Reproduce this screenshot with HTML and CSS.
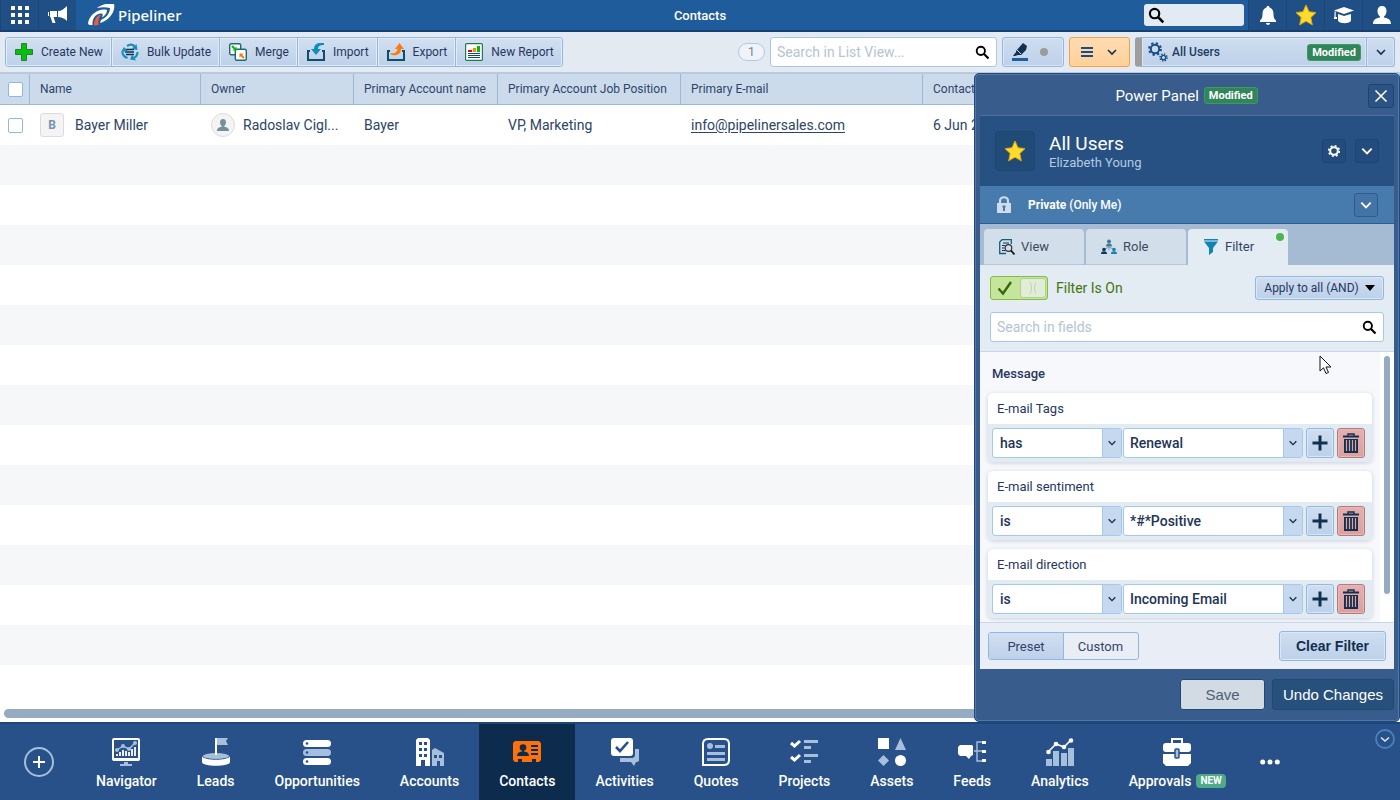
FILE: index.html
```html
<!DOCTYPE html>
<html lang="en">
<head>
  <meta charset="UTF-8">
  <title>Pipeliner - Contacts</title>
  <link rel="stylesheet" href="styles.css">
</head>
<body>
  <!-- shared shapes -->
  <svg class="sprite" aria-hidden="true">
    <symbol id="chevron" viewBox="0 0 12 12"><path d="M2 4l4 4 4-4" fill="none" stroke="currentColor" stroke-width="1.6"/></symbol>
    <symbol id="search" viewBox="0 0 16 16"><circle cx="6.2" cy="6.2" r="4.4" fill="none" stroke="currentColor" stroke-width="2"/><path d="M9.4 9.4l5 5" stroke="currentColor" stroke-width="2.4"/></symbol>
    <symbol id="star" viewBox="0 0 22 22">
      <path d="M11 1l3 6.8 7 .8-5.2 4.9 1.5 7.3L11 17.2 4.7 20.8l1.5-7.3L1 8.6l7-.8z" fill="#fddc2c" stroke="#e0a80c" stroke-width="1"/>
    </symbol>
    <symbol id="plus" viewBox="0 0 16 16"><path d="M8 .5v15M.5 8h15" stroke="currentColor" stroke-width="3"/></symbol>
    <symbol id="trash" viewBox="0 0 16 20">
      <path d="M5 3V1h6v2" fill="none" stroke="currentColor" stroke-width="1.4"/>
      <path d="M0 2.5h16v2H0zM1 6h14v14H1z" fill="currentColor"/>
      <path d="M3.5 7v11M6.5 7v11M9.5 7v11M12.5 7v11" stroke="#dfa3a3" stroke-width="1.2"/>
    </symbol>
  </svg>

  <header class="topbar">
    <div class="topbar-left">
      <button class="top-btn" aria-label="Apps">
        <svg width="18" height="18" viewBox="0 0 18 18" fill="#fff"><path d="M0 0h4v4H0zM7 0h4v4H7zM14 0h4v4h-4zM0 7h4v4H0zM7 7h4v4H7zM14 7h4v4h-4zM0 14h4v4H0zM7 14h4v4H7zM14 14h4v4h-4z"/></svg>
      </button>
      <button class="top-btn" aria-label="News">
        <svg width="20" height="20" viewBox="0 0 20 20" fill="#fff"><path d="M19 1v15c-3-3-6-4-9-4V6c3 0 6-2 9-5zM9 6v6H5.5l2 6H4.5L2.5 12H2V6zM1 7v4H0V7z"/></svg>
      </button>
      <a class="logo" href="#">
        <svg width="28" height="22" viewBox="0 0 28 22"><path d="M9 4C14 0 21-1 26 0c2 7-5 17-14 19l1-3c5-2 9-7 9-12-4-1-8-1-13 0z" fill="#fff"/><path d="M19 6C11 4 3 10 .5 17c-1 3 0 4 2 4h2C4 15 7 10 13 9.5c2 0 2 1 1 4 3-2 5-4 5-7.5z" fill="#fff"/><path d="M13 10.500c-4 1-7 5-7 11l4.500-.5c-.5-4 0-7 2.500-10.500z" fill="#f15b3a"/></svg>
        <span>Pipeliner</span>
      </a>
    </div>
    <h1 class="topbar-title">Contacts</h1>
    <div class="topbar-right">
      <label class="global-search">
        <svg width="17" height="17"><use href="#search"/></svg>
        <input type="text" aria-label="Search">
      </label>
      <button class="top-btn" aria-label="Notifications">
        <svg width="18" height="20" viewBox="0 0 18 20" fill="#fff"><path d="M9 1c1 0 1.500.6 1.500 1.500C13.500 3.500 14.500 6 14.500 9c0 4 1 5 2.500 6.500V17H1v-1.500C2.500 14 3.500 13 3.500 9c0-3 1-5.500 4-6.500C7.500 1.600 8 1 9 1zM7 18h4c0 1-1 2-2 2s-2-1-2-2z"/></svg>
      </button>
      <button class="top-btn" aria-label="Favorites"><svg width="22" height="22"><use href="#star"/></svg></button>
      <button class="top-btn" aria-label="Learning">
        <svg width="22" height="18" viewBox="0 0 22 18" fill="#fff"><path d="M11 1l10 3.500L11 8 1 4.500zM5 8l6 2 7-2v7c-3 3-10 3-13 0zM1.500 5.500h1.200V11h1.300v2H1v-2h.5z"/></svg>
      </button>
      <button class="top-btn" aria-label="Profile">
        <svg width="20" height="20" viewBox="0 0 20 20" fill="#fff"><path d="M10 1c3 0 4.500 2 4.500 5 0 2.500-1 4.500-2.500 5.500v1c4 .8 7 2 7 6.500H1c0-4.500 3-5.700 7-6.500v-1C6.500 10.500 5.500 8.500 5.500 6c0-3 1.500-5 4.500-5z"/></svg>
      </button>
    </div>
  </header>

  <div class="toolbar">
    <div class="btn-group">
      <button class="tool-btn"><svg width="18" height="18" viewBox="0 0 18 18"><path d="M6.500 .5h5v6h6v5h-6v6h-5v-6h-6v-5h6z" fill="#06c206" stroke="#2c7a3c"/></svg>Create New</button>
      <button class="tool-btn"><svg width="18" height="18" viewBox="0 0 18 18"><path d="M5 6.500h8M4 9h9M5 11.500h8" stroke="#12304f" stroke-width="1.6"/><g fill="none" stroke="#1590bd" stroke-width="2.2"><path d="M6 3c3-2 6-2 8 1M1.500 9c0 3 2 5 5 6M16.500 9c0 3-1 5-4 6"/></g><path d="M15.500 1l1 6-6-1zM0 9l3-5 4 4zM11 11.500l-2 5 6 1z" fill="#1590bd"/></svg>Bulk Update</button>
      <button class="tool-btn"><svg width="18" height="18" viewBox="0 0 18 18"><rect x=".7" y=".7" width="11" height="11" rx="1.5" fill="#fff" stroke="#1c6a72" stroke-width="1.4"/><rect x="6.3" y="6.3" width="11" height="11" rx="1.5" fill="#fff" stroke="#1c6a72" stroke-width="1.4"/><path d="M3 3l3 3" stroke="#0b0" stroke-width="2"/><path d="M7.500 3.500v4h-4z" fill="#0b0"/><path d="M12 12l3 3" stroke="#f70" stroke-width="2"/><path d="M10.500 14.500v-4h4z" fill="#f70"/></svg>Merge</button>
      <button class="tool-btn"><svg width="18" height="18" viewBox="0 0 18 18"><path d="M3 8H1v9h16V8h-2" fill="none" stroke="#0b5068" stroke-width="2"/><path d="M17 0C11-1 7 1 7 6H4l5 6 5-6h-3c0-3 2-4 6-4z" fill="#0e8fbb"/></svg>Import</button>
      <button class="tool-btn"><svg width="18" height="18" viewBox="0 0 18 18"><path d="M3 8H1v9h16V8h-2" fill="none" stroke="#0b5068" stroke-width="2"/><path d="M12.500 0l4.500 6h-3c0 5-4 7-9 6-1-.5-1.500-1-2-2 4 1 7 0 7.500-4H8z" fill="#ff7a0e"/></svg>Export</button>
      <button class="tool-btn"><svg width="18" height="18" viewBox="0 0 18 18"><rect x=".6" y=".6" width="16.8" height="16.8" rx="1" fill="#fff" stroke="#1f7a50" stroke-width="1.2"/><path d="M3 7h4v2H3z" fill="#e00"/><path d="M8 5h3v4H8z" fill="#f80"/><path d="M12 3h3v6h-3z" fill="#0b0"/><path d="M3 10.500h12M3 12.500h12M3 14.500h12" stroke="#0b4a68" stroke-width="1.1"/></svg>New Report</button>
    </div>
    <div class="toolbar-right">
      <span class="count">1</span>
      <label class="search-box list-search">
        <input type="text" placeholder="Search in List View..." aria-label="Search in List View">
        <svg width="15" height="15"><use href="#search"/></svg>
      </label>
      <button class="ctl highlight-btn" aria-label="Highlight">
        <svg width="16" height="18" viewBox="0 0 16 18"><path d="M11 0l4 3-1 4-5 5H6l-2-2V8zM3.500 9.500L6 12l-3 1H1z" fill="#12304f"/><path d="M5 7l4 4" stroke="#c8d8ec"/><path d="M0 15h16v3H0z" fill="#1f5c9b"/></svg>
        <span class="dot"></span>
      </button>
      <button class="ctl layout-btn" aria-label="Layout">
        <svg width="12" height="12" viewBox="0 0 12 12"><path d="M0 2h12M0 6h12M0 10h12" stroke="#174e85" stroke-width="2"/></svg>
        <svg class="chev" width="12" height="12"><use href="#chevron"/></svg>
      </button>
      <div class="profile-select">
        <button class="ctl profile-btn">
          <svg width="20" height="20" viewBox="0 0 20 20" fill="none" stroke="#174e85"><circle cx="7" cy="7" r="4.2" stroke-width="2"/><circle cx="7" cy="7" r="5.9" stroke-width="2" stroke-dasharray="2.3 2.34"/><circle cx="15.5" cy="15.5" r="2.2" stroke-width="1.3"/><circle cx="15.5" cy="15.5" r="3.5" stroke-width="1.5" stroke-dasharray="1.4 1.35"/></svg>
          <span class="profile-name">All Users</span>
          <span class="badge">Modified</span>
        </button>
        <button class="ctl profile-drop" aria-label="Choose profile"><svg class="chev" width="12" height="12"><use href="#chevron"/></svg></button>
      </div>
    </div>
  </div>

  <main class="workspace">
    <div class="list">
      <table>
        <colgroup>
          <col class="c-check"><col class="c-name"><col class="c-owner"><col class="c-account"><col class="c-job"><col class="c-email"><col>
        </colgroup>
        <thead>
          <tr>
            <th><input type="checkbox" aria-label="Select all"></th>
            <th>Name</th>
            <th>Owner</th>
            <th>Primary Account name</th>
            <th>Primary Account Job Position</th>
            <th>Primary E-mail</th>
            <th>Contact Created</th>
          </tr>
        </thead>
        <tbody>
          <tr>
            <td><input type="checkbox" aria-label="Select Bayer Miller"></td>
            <td><div class="cell"><span class="initial">B</span>Bayer Miller</div></td>
            <td><div class="cell owner"><span class="avatar"><svg width="12" height="12" viewBox="0 0 12 12" fill="#78909c"><path d="M6 0c2 0 3 1.300 3 3.200C9 5 8 6.500 7.300 7v.7C10 8.200 12 9 12 12H0C0 9 2 8.200 4.700 7.700V7C4 6.500 3 5 3 3.200 3 1.300 4 0 6 0z"/></svg></span>Radoslav Cigl...</div></td>
            <td>Bayer</td>
            <td>VP, Marketing</td>
            <td><a href="#">info@pipelinersales.com</a></td>
            <td>6 Jun 2023</td>
          </tr>
        </tbody>
      </table>
      <div class="h-scroll"><div class="h-thumb"></div></div>
    </div>

    <aside class="panel">
      <div class="panel-head">
        <h2>Power Panel</h2>
        <span class="badge">Modified</span>
        <button class="dark-btn close" aria-label="Close"><svg width="14" height="14" viewBox="0 0 14 14"><path d="M1.500 1.500l11 11M12.500 1.500l-11 11" stroke="#fff" stroke-width="1.6"/></svg></button>
      </div>

      <div class="panel-user">
        <span class="star-box"><svg width="22" height="22"><use href="#star"/></svg></span>
        <div class="user-text">
          <strong>All Users</strong>
          <span>Elizabeth Young</span>
        </div>
        <button class="dark-btn" aria-label="Settings"><svg width="14" height="14" viewBox="0 0 14 14" fill="none" stroke="#fff"><circle cx="7" cy="7" r="3.8" stroke-width="2"/><circle cx="7" cy="7" r="5.3" stroke-width="1.6" stroke-dasharray="2 2.16"/></svg></button>
        <button class="dark-btn" aria-label="Profile menu"><svg width="14" height="14"><use href="#chevron"/></svg></button>
      </div>

      <div class="panel-privacy">
        <svg width="16" height="17" viewBox="0 0 16 17"><path d="M4 7V5c0-5 8-5 8 0v2" fill="none" stroke="#cfdcec" stroke-width="2.2"/><path d="M1 7h14v10H1z" fill="#cfdcec"/><path d="M6.500 9.500h3v2H9V15H7v-3.500h-.5z" fill="#477bb0"/></svg>
        <span><b>Private</b> (Only Me)</span>
        <button class="dark-btn" aria-label="Change privacy"><svg width="14" height="14"><use href="#chevron"/></svg></button>
      </div>

      <div class="tabs">
        <button class="tab"><svg width="16" height="16" viewBox="0 0 16 16" fill="none"><path d="M7 14.500H.7V3l2.300-2.300h9.300V5" stroke="#12607a" stroke-width="1.3"/><path d="M4 4h6M3 6.500h3M3 9h2.500M3 11.500h3" stroke="#12304f" stroke-width="1.2"/><circle cx="9.5" cy="9" r="3.3" stroke="#333" stroke-width="1.2"/><path d="M12 11.500l3.500 4" stroke="#111" stroke-width="1.8"/></svg>View</button>
        <button class="tab"><svg width="16" height="16" viewBox="0 0 16 16"><g fill="#3e7890"><circle cx="8" cy="2.5" r="2"/><path d="M5 7.500c0-2 1-3 3-3s3 1 3 3z"/></g><path d="M8 8v3M4 10l4-2 4 2" fill="none" stroke="#6d9fc8"/><g fill="#12395a"><circle cx="3" cy="10.5" r="1.8"/><path d="M0 15c0-2 1-2.700 3-2.700S6 13 6 15z"/></g><g fill="#0e86b0"><circle cx="13" cy="10.5" r="1.8"/><path d="M10 15c0-2 1-2.700 3-2.700s3 .7 3 2.700z"/></g></svg>Role</button>
        <button class="tab active"><svg width="16" height="16" viewBox="0 0 16 16" fill="#0e86b5"><path d="M1 0h14v1.500H1zM1 2.500h14L10 9v4l-4 3V9z"/></svg>Filter<span class="tab-dot"></span></button>
      </div>

      <div class="filter-head">
        <div class="filter-row">
          <label class="toggle">
            <input type="checkbox" checked>
            <span class="switch">
              <svg width="16" height="16" viewBox="0 0 16 16"><path d="M1.500 8.500L6 13.500 14 2" fill="none" stroke="#35690a" stroke-width="2.4"/></svg>
              <span class="knob"><svg width="8" height="12" viewBox="0 0 8 12" fill="none" stroke="#bcd6a4"><path d="M1 0c2 4 2 8 0 12M7 0c-2 4-2 8 0 12"/></svg></span>
            </span>
            Filter Is On
          </label>
          <button class="ctl apply-btn">Apply to all (AND)<svg width="10" height="6" viewBox="0 0 10 6"><path d="M0 0h10L5 6z"/></svg></button>
        </div>
        <label class="search-box">
          <input type="text" placeholder="Search in fields" aria-label="Search in fields">
          <svg width="15" height="15"><use href="#search"/></svg>
        </label>
      </div>

      <div class="filter-body">
        <div class="filter-list">
          <h3>Message</h3>

          <section class="card">
            <h4>E-mail Tags</h4>
            <div class="card-row">
              <label class="combo op"><select aria-label="E-mail Tags condition"><option>has</option></select><span><svg width="10" height="10"><use href="#chevron"/></svg></span></label>
              <label class="combo val"><select aria-label="E-mail Tags value"><option>Renewal</option></select><span><svg width="10" height="10"><use href="#chevron"/></svg></span></label>
              <button class="ctl sq" aria-label="Add"><svg width="16" height="16"><use href="#plus"/></svg></button>
              <button class="ctl sq delete" aria-label="Delete"><svg width="16" height="20"><use href="#trash"/></svg></button>
            </div>
          </section>

          <section class="card">
            <h4>E-mail sentiment</h4>
            <div class="card-row">
              <label class="combo op"><select aria-label="E-mail sentiment condition"><option>is</option></select><span><svg width="10" height="10"><use href="#chevron"/></svg></span></label>
              <label class="combo val"><select aria-label="E-mail sentiment value"><option>*#*Positive</option></select><span><svg width="10" height="10"><use href="#chevron"/></svg></span></label>
              <button class="ctl sq" aria-label="Add"><svg width="16" height="16"><use href="#plus"/></svg></button>
              <button class="ctl sq delete" aria-label="Delete"><svg width="16" height="20"><use href="#trash"/></svg></button>
            </div>
          </section>

          <section class="card">
            <h4>E-mail direction</h4>
            <div class="card-row">
              <label class="combo op"><select aria-label="E-mail direction condition"><option>is</option></select><span><svg width="10" height="10"><use href="#chevron"/></svg></span></label>
              <label class="combo val"><select aria-label="E-mail direction value"><option>Incoming Email</option></select><span><svg width="10" height="10"><use href="#chevron"/></svg></span></label>
              <button class="ctl sq" aria-label="Add"><svg width="16" height="16"><use href="#plus"/></svg></button>
              <button class="ctl sq delete" aria-label="Delete"><svg width="16" height="20"><use href="#trash"/></svg></button>
            </div>
          </section>
        </div>
        <div class="v-scroll"><div class="v-thumb"></div></div>
      </div>

      <div class="filter-foot">
        <div class="segmented">
          <button class="on">Preset</button>
          <button>Custom</button>
        </div>
        <button class="ctl clear-btn">Clear Filter</button>
      </div>

      <div class="panel-actions">
        <button class="save-btn">Save</button>
        <button class="undo-btn">Undo Changes</button>
      </div>

      <svg class="cursor" width="13" height="20" viewBox="0 0 13 20"><path d="M1 1v15l3.500-3.200L7 18.500l2.500-1L7 12h5z" fill="#fff" stroke="#111"/></svg>
    </aside>
  </main>

  <nav class="bottom-nav">
    <button class="nav-add" aria-label="Add"><svg width="30" height="30" viewBox="0 0 30 30" fill="none"><circle cx="15" cy="15" r="14" stroke="#a5bfdc" stroke-width="2"/><path d="M15 9v12M9 15h12" stroke="#fff" stroke-width="2"/></svg></button>
    <a class="nav-item" href="#">
      <svg width="28" height="28" viewBox="0 0 28 28"><rect x="1" y="1" width="26" height="21" rx="1" fill="none" stroke="#fff" stroke-width="2"/><path d="M1 20h26v3H1z" fill="#fff"/><path d="M12 24h4v2h4v2H8v-2h4z" fill="#a5bfdc"/><path d="M5 18v-2M8 18v-4M11 18v-6M14 18v-5M17 18v-4M20 18v-7M23 18V9" stroke="#fff" stroke-width="1.8"/><path d="M5 12l6-4 6 3 6-6" fill="none" stroke="#a5bfdc" stroke-width="1.5"/><g fill="#a5bfdc"><circle cx="5" cy="12" r="2"/><circle cx="11" cy="8" r="2"/><circle cx="17" cy="11" r="2"/><circle cx="23" cy="5" r="2"/></g></svg>
      <span>Navigator</span>
    </a>
    <a class="nav-item" href="#">
      <svg width="28" height="28" viewBox="0 0 28 28"><ellipse cx="14" cy="18" rx="13" ry="3" fill="#a5bfdc"/><path d="M0 18c1 5 27 5 28 0v6c0 5-28 5-28 0z" fill="#fff"/><path d="M15 0h11l-2 3 2 4H15z" fill="#a5bfdc"/><path d="M13 0h2v17h-2z" fill="#fff"/></svg>
      <span>Leads</span>
    </a>
    <a class="nav-item" href="#">
      <svg width="28" height="28" viewBox="0 0 28 28"><rect y="2" width="28" height="7" rx="3.5" fill="#fff"/><rect y="11" width="28" height="7" rx="3.5" fill="#a5bfdc"/><rect y="20" width="28" height="7" rx="3.5" fill="#fff"/><g fill="#285189"><circle cx="4" cy="5.5" r="1.3"/><circle cx="4" cy="14.5" r="1.3"/><circle cx="4" cy="23.5" r="1.3"/></g></svg>
      <span>Opportunities</span>
    </a>
    <a class="nav-item" href="#">
      <svg width="28" height="28" viewBox="0 0 28 28"><path d="M2 0h10l2 2v26H9v-6H5v6H0V2z" fill="#fff"/><path d="M16 28V12l3-2 9 5v13h-4v-5h-3v5z" fill="#a5bfdc"/><path d="M3 4h3v3H3zM8 4h3v3H8zM3 10h3v3H3zM8 10h3v3H8zM3 16h3v3H3zM8 16h3v3H8zM18 17h3v3h-3zM23 17h3v3h-3z" fill="#285189"/></svg>
      <span>Accounts</span>
    </a>
    <a class="nav-item active" href="#">
      <svg width="28" height="28" viewBox="0 0 28 28"><path d="M2 3h24l2 2v17l-2 2h-3v-3h-4v3H9v-3H5v3H2l-2-2V5z" fill="#ff6f0a"/><g fill="#0d2b4d"><circle cx="10" cy="9.5" r="3.3"/><path d="M4 18c0-3 2-4 5-4.500V12h2v1.500c3 .5 5 1.500 5 4.500zM18 7h7v2h-7zM18 11h7v2h-7zM18 15h7v2h-7z"/></g></svg>
      <span>Contacts</span>
    </a>
    <a class="nav-item" href="#">
      <svg width="28" height="28" viewBox="0 0 28 28"><rect width="22" height="18" rx="3" fill="#fff"/><path d="M5 9l4 4 8-9" fill="none" stroke="#285189" stroke-width="2.6"/><path d="M24 11h4v12l-2 1h-1l-2 4-3-4H9v-4h13l2-2z" fill="#a5bfdc"/></svg>
      <span>Activities</span>
    </a>
    <a class="nav-item" href="#">
      <svg width="28" height="28" viewBox="0 0 28 28"><path d="M1 27V6c0-3 2-5 5-5h16c3 0 5 2 5 5v16c0 3-2 5-5 5z" fill="none" stroke="#fff" stroke-width="2"/><g fill="#a5bfdc"><circle cx="8" cy="8" r="3"/><path d="M13 7h10v3H13zM5 14h18v3H5zM5 20h18v3H5z"/></g></svg>
      <span>Quotes</span>
    </a>
    <a class="nav-item" href="#">
      <svg width="28" height="28" viewBox="0 0 28 28"><path d="M1 5l3.500 3L10 3M1 19l3.500 3L10 17" fill="none" stroke="#fff" stroke-width="3"/><path d="M14 2h14v3H14zM14 8h7v3h-7zM14 16h14v3H14zM14 22h7v3h-7z" fill="#a5bfdc"/></svg>
      <span>Projects</span>
    </a>
    <a class="nav-item" href="#">
      <svg width="28" height="28" viewBox="0 0 28 28"><path d="M0 0h11v11H0z" fill="#fff"/><path d="M22.500 0L28 12H17zM5.500 17l5.500 5.500L5.500 28 0 22.500z" fill="#a5bfdc"/><circle cx="22.5" cy="22.5" r="5.5" fill="#fff"/></svg>
      <span>Assets</span>
    </a>
    <a class="nav-item" href="#">
      <svg width="28" height="28" viewBox="0 0 28 28"><path d="M2 7h12l1 1v9l-2 1-2 3-3-3H2l-2-2V9z" fill="#fff"/><path d="M25 4h-6v19h6M16 13h9" fill="none" stroke="#a5bfdc" stroke-width="1.4"/><path d="M24 3h4v3h-4zM24 12h4v3h-4zM24 21h4v3h-4z" fill="#fff"/></svg>
      <span>Feeds</span>
    </a>
    <a class="nav-item" href="#">
      <svg width="28" height="28" viewBox="0 0 28 28"><path d="M0 21h6v7H0zM7 13h6v15H7zM15 15h6v13h-6zM22 10h6v18h-6z" fill="#a5bfdc"/><path d="M2 14l8-8 8 3 7-7" fill="none" stroke="#fff" stroke-width="1.6"/><g fill="#fff"><circle cx="2.5" cy="14" r="2.3"/><circle cx="10" cy="6" r="2.3"/><circle cx="18" cy="9" r="2.3"/><circle cx="25" cy="2.5" r="2.3"/></g></svg>
      <span>Analytics</span>
    </a>
    <a class="nav-item" href="#">
      <svg width="28" height="28" viewBox="0 0 28 28"><path d="M9 5V1h10v4" fill="none" stroke="#fff" stroke-width="2"/><rect y="5" width="28" height="9" rx="3" fill="#fff"/><path d="M0 16h28v9l-3 3H3l-3-3z" fill="#fff"/><rect x="12" y="11" width="4" height="9" rx="1" fill="#a5bfdc" stroke="#285189" stroke-width="1.5"/></svg>
      <span>Approvals<em class="new">NEW</em></span>
    </a>
    <button class="nav-more" aria-label="More"><svg width="20" height="6" viewBox="0 0 20 6" fill="#fff"><circle cx="2.7" cy="3" r="2.5"/><circle cx="10" cy="3" r="2.5"/><circle cx="17.3" cy="3" r="2.5"/></svg></button>
    <button class="nav-collapse" aria-label="Collapse"><svg width="20" height="20" viewBox="0 0 20 20" fill="none"><circle cx="10" cy="10" r="9" stroke="#4a80bd" stroke-width="1.8"/><path d="M6 8.500l4 3.500 4-3.500" stroke="#dce8f5" stroke-width="1.6"/></svg></button>
  </nav>
</body>
</html>
```
FILE: styles.css
```css
* {
  box-sizing: border-box;
}

body {
  margin: 0;
  min-height: 100vh;
  display: flex;
  flex-direction: column;
  font-family: Roboto, sans-serif;
  font-size: 14px;
  color: #2d4566;
  background-color: white;
}

button, input, select {
  font-family: inherit;
  font-size: 13px;
  color: inherit;
  margin: 0;
}

button {
  display: flex;
  align-items: center;
  justify-content: center;
  padding: 0;
  border: none;
  background: none;
  cursor: pointer;
}

h1, h2, h3, h4 {
  margin: 0;
  font-weight: 500;
}

svg {
  flex-shrink: 0;
}

.sprite {
  display: none;
}

/* top bar */
.topbar {
  display: grid;
  grid-template-columns: 1fr auto 1fr;
  height: 32px;
  background-color: #1f5c9b;
  border-bottom: 2px solid #163f74;
  color: white;
}

.topbar-left, .topbar-right {
  display: flex;
}

.topbar-right {
  justify-content: flex-end;
  align-items: center;
}

.topbar-title {
  align-self: center;
  font-size: 13px;
}

.top-btn {
  width: 38px;
  height: 30px;
  background-color: #204f85;
  border-left: 1px solid #1c4677;
}

.logo {
  display: flex;
  align-items: center;
  gap: 2px;
  margin-left: 12px;
  color: white;
  font-family: "Noto Sans", sans-serif;
  font-size: 15px;
  font-weight: 500;
  text-decoration: none;
}

.global-search {
  display: flex;
  align-items: center;
  width: 100px;
  height: 22px;
  padding: 0 4px;
  margin-right: 4px;
  border-radius: 3px;
  background-color: #e2eaf4;
  color: black;
}

.global-search input {
  width: 100%;
  border: none;
  background: none;
}

/* toolbar */
.toolbar {
  display: flex;
  justify-content: space-between;
  height: 42px;
  padding: 5px;
  background-color: #e3eaf2;
  border-bottom: 2px solid #b9c9de;
}

.btn-group {
  display: flex;
  height: 30px;
  border: 1px solid #8fb8e3;
  border-radius: 3px;
  overflow: hidden;
}

.tool-btn {
  gap: 8px;
  padding: 0 7px 0 8px;
  background-image: linear-gradient(#d2dff0, #bdd1ea);
  border: 1px solid #e2ecf7;
  color: #26375f;
  font-size: 12px;
}

.tool-btn + .tool-btn {
  box-shadow: -1px 0 0 #8fb8e3;
  margin-left: 1px;
}

.toolbar-right {
  display: flex;
  gap: 5px;
}

.count {
  align-self: center;
  width: 27px;
  height: 18px;
  border: 1px solid #b3c7e2;
  border-radius: 9px;
  background-color: #f0f4fa;
  color: #7b8794;
  font-size: 13px;
  line-height: 16px;
  text-align: center;
}

.search-box {
  display: flex;
  align-items: center;
  height: 30px;
  padding: 0 6px;
  background-color: white;
  border: 1px solid #a4c8ee;
  border-radius: 3px;
  color: black;
}

.search-box input {
  flex: 1;
  min-width: 0;
  padding: 0;
  border: none;
  background: none;
  font-size: 14px;
}

.search-box input::placeholder {
  color: #b4c4d4;
}

.list-search {
  width: 227px;
}

.ctl {
  height: 30px;
  border: 1px solid #8fb8e3;
  border-radius: 3px;
  background-image: linear-gradient(#cfddef, #bdd1ea);
  box-shadow: inset 0 0 0 1px #dbe7f5;
  color: #26375f;
}

.highlight-btn {
  width: 62px;
  gap: 12px;
  padding-right: 6px;
}

.dot {
  width: 8px;
  height: 8px;
  border-radius: 50%;
  background-color: #9b9b9b;
}

.layout-btn {
  width: 61px;
  gap: 13px;
  border-color: #eda24e;
  background-image: linear-gradient(#ffdcb2, #ffd099);
  box-shadow: none;
}

.chev {
  color: #12304f;
}

.profile-select {
  display: flex;
  width: 260px;
}

.profile-btn {
  flex: 1;
  gap: 4px;
  padding: 0 5px 0 6px;
  border-left: 7px solid #9e9e9e;
  border-radius: 3px 0 0 3px;
}

.profile-name {
  flex: 1;
  text-align: left;
  font-size: 12px;
  font-weight: 500;
  color: #1d3c63;
}

.profile-drop {
  width: 28px;
  border-left: none;
  border-radius: 0 3px 3px 0;
}

.badge {
  padding: 0 4px;
  border: 1px solid #3f9a62;
  border-radius: 3px;
  background-color: #30855a;
  color: white;
  font-size: 11px;
  font-weight: 700;
  line-height: 15px;
}

/* contact list */
.workspace {
  position: relative;
  flex: 1;
  display: flex;
}

.list {
  flex: 1;
  display: flex;
  flex-direction: column;
  justify-content: space-between;
  min-width: 0;
  overflow: hidden;
  background: repeating-linear-gradient(#fff 0, #fff 40px, #f5f7f9 40px, #f5f7f9 80px) 0 31px no-repeat;
}

table {
  width: 100%;
  table-layout: fixed;
  border-collapse: separate;
  border-spacing: 0;
}

.c-check { width: 30px; }
.c-name { width: 171px; }
.c-owner { width: 153px; }
.c-account { width: 144px; }
.c-job { width: 183px; }
.c-email { width: 242px; }

th, td {
  padding: 0 0 0 10px;
  text-align: left;
  white-space: nowrap;
}

th {
  height: 31px;
  background-color: #ccdbec;
  border-right: 1px solid #9db8d4;
  border-bottom: 1px solid #9db8d4;
  font-size: 12px;
  font-weight: 400;
}

td {
  height: 40px;
}

th:first-child, td:first-child {
  padding-left: 8px;
}

td a {
  color: inherit;
  text-underline-offset: 2px;
}

th input, td input {
  display: block;
  width: 15px;
  height: 15px;
  appearance: none;
  background-color: white;
  border: 1px solid #8fb8e3;
  border-radius: 2px;
}

.cell {
  display: flex;
  align-items: center;
  gap: 11px;
}

.owner {
  gap: 8px;
}

.initial, .avatar {
  display: flex;
  align-items: center;
  justify-content: center;
  width: 24px;
  height: 24px;
  background-color: #f4f4f4;
  border: 1px solid #dcdcdc;
  border-radius: 3px;
  color: #7493b5;
  font-size: 12px;
  font-weight: 700;
}

.avatar {
  border-radius: 50%;
}

.h-scroll {
  padding: 4px;
  background-color: white;
}

.h-thumb {
  height: 9px;
  border-radius: 5px;
  background-color: #94abc1;
}

/* power panel, floats above the list */
.panel {
  position: absolute;
  top: -1px;
  right: 0;
  bottom: 0;
  width: 426px;
  display: flex;
  flex-direction: column;
  padding: 0 5px;
  border: 1px solid #1f4a80;
  border-radius: 5px;
  background-color: #385c8c;
  box-shadow: inset 0 0 0 1px #5478a4;
  color: white;
}

.panel-head {
  display: flex;
  align-items: center;
  justify-content: center;
  gap: 5px;
  height: 42px;
  padding-top: 2px;
  border-bottom: 1px solid #4c72a3;
}

.panel-head h2 {
  margin-left: auto;
  padding-left: 30px;
  font-size: 15px;
  font-weight: 400;
}

.dark-btn {
  width: 24px;
  height: 24px;
  border: 1px solid #1c4573;
  border-radius: 3px;
  background-color: #234c7c;
}

.panel-head .close {
  width: 26px;
  margin-left: auto;
  background-color: #2b5384;
}

.panel-user {
  display: flex;
  align-items: center;
  gap: 9px;
  height: 70px;
  padding: 0 15px;
  background-color: #265182;
}

.star-box {
  display: flex;
  align-items: center;
  justify-content: center;
  width: 40px;
  height: 40px;
  border: 1px solid #1c4573;
  border-radius: 4px;
  background-color: #214b77;
}

.user-text {
  flex: 1;
  display: flex;
  flex-direction: column;
  padding-top: 2px;
  margin-left: 5px;
}

.user-text strong {
  font-size: 19px;
  font-weight: 400;
  line-height: 22px;
}

.user-text span {
  color: #b5cae0;
  font-size: 13px;
  line-height: 16px;
}

.panel-privacy {
  display: flex;
  align-items: center;
  gap: 16px;
  height: 38px;
  padding: 0 16px;
  background-color: #477bad;
  border-bottom: 1px solid #2c5c90;
  font-size: 12px;
  font-weight: 500;
}

.panel-privacy .dark-btn {
  margin-left: auto;
  background-color: #4474a6;
  border-color: #2c5c90;
}

.tabs {
  display: flex;
  align-items: flex-end;
  gap: 2px;
  height: 41px;
  padding: 0 4px;
  background-color: #a5bbd4;
}

.tab {
  justify-content: flex-start;
  position: relative;
  gap: 6px;
  width: 100px;
  height: 36px;
  padding: 0 15px;
  border-bottom: 1px solid #b4c7de;
  border-radius: 4px 4px 0 0;
  background-color: #d3deeb;
  color: #3c4a5c;
}

.tab.active {
  background-color: #e3ebf3;
  border-color: #e3ebf3;
  color: #2d4566;
}

.tab-dot {
  position: absolute;
  top: 4px;
  right: 4px;
  width: 8px;
  height: 8px;
  border-radius: 50%;
  background-color: #4cb64c;
}

.filter-head {
  display: flex;
  flex-direction: column;
  gap: 12px;
  padding: 11px 10px 9px;
  background-color: #e3ebf3;
  border-bottom: 1px solid #c6d7e9;
}

.filter-row {
  display: flex;
  justify-content: space-between;
}

.toggle {
  display: flex;
  align-items: center;
  gap: 8px;
  color: #44760d;
}

.toggle input {
  position: absolute;
  opacity: 0;
}

.switch {
  display: flex;
  align-items: center;
  justify-content: space-between;
  width: 58px;
  height: 24px;
  padding: 1px 1px 1px 6px;
  border: 1px solid #86bd3f;
  border-radius: 3px;
  background-color: #c4e59b;
}

.knob {
  display: flex;
  align-items: center;
  justify-content: center;
  width: 26px;
  height: 20px;
  border: 1px solid #b0cf94;
  border-radius: 3px;
  background-color: #e2edd9;
}

.apply-btn {
  gap: 6px;
  height: 24px;
  width: 129px;
  font-size: 12px;
}

.apply-btn svg {
  fill: black;
}

.filter-body {
  flex: 1;
  display: flex;
  min-height: 0;
  background-color: #f7f8fc;
}

.filter-list {
  flex: 1;
  display: flex;
  flex-direction: column;
  gap: 9px;
  padding: 12px 8px 0;
  overflow: hidden;
}

.filter-list h3 {
  padding-left: 4px;
  color: #26375f;
  font-size: 13px;
  line-height: 20px;
}

.card {
  flex-shrink: 0;
  border-radius: 5px;
  background-color: white;
  box-shadow: 0 1px 4px rgba(60, 80, 110, 0.25);
}

.card h4 {
  padding-left: 9px;
  color: #26375f;
  font-size: 13px;
  font-weight: 400;
  line-height: 31px;
}

.card-row {
  display: flex;
  gap: 3px;
  padding: 4px 7px 4px 4px;
  border-radius: 0 0 5px 5px;
  background-color: #e2eaf2;
}

.combo {
  display: grid;
  height: 30px;
  border: 1px solid #a4c8ee;
  border-radius: 3px;
  background-color: white;
  overflow: hidden;
}

.combo select, .combo span {
  grid-area: 1 / 1;
}

.combo select {
  width: 100%;
  padding: 0 20px 0 7px;
  appearance: none;
  border: none;
  background: none;
  color: #1d3559;
  font-size: 14px;
  font-weight: 500;
}

.combo span {
  justify-self: end;
  display: flex;
  align-items: center;
  justify-content: center;
  width: 19px;
  border-left: 1px solid #a4c8ee;
  background-color: #c5d8ed;
  color: #12304f;
  pointer-events: none;
}

.op {
  width: 130px;
  margin-right: -2px;
}

.val {
  flex: 1;
}

.val select {
  padding-left: 6px;
}

.sq {
  width: 28px;
  color: #12304f;
}

.delete {
  border-color: #b97878;
  background-image: linear-gradient(#e5b0b0, #dc9f9f);
  box-shadow: inset 0 0 0 1px #e6b9b9;
}

.v-scroll {
  width: 14px;
  padding: 4px;
  background-color: white;
}

.v-thumb {
  width: 6px;
  height: 91%;
  border-radius: 3px;
  background-color: #94abc1;
}

.filter-foot {
  display: flex;
  align-items: center;
  justify-content: space-between;
  height: 47px;
  padding: 0 8px;
  background-color: #e9eef6;
  border-top: 1px solid #c6d7e9;
}

.segmented {
  display: flex;
  height: 28px;
  border: 1px solid #8fb8e3;
  border-radius: 3px;
  overflow: hidden;
}

.segmented button {
  width: 75px;
  color: #33436a;
}

.segmented .on {
  width: 74px;
  background-image: linear-gradient(#d2dff0, #bdd1ea);
  box-shadow: 1px 0 0 #8fb8e3;
}

.clear-btn {
  width: 107px;
  color: #12304f;
  font-family: "Liberation Sans", sans-serif;
  font-size: 14px;
  font-weight: 700;
}

.panel-actions {
  display: flex;
  gap: 7px;
  justify-content: flex-end;
  padding: 10px 0 11px;
}

.save-btn, .undo-btn {
  height: 31px;
  border: 1px solid #1f4a73;
  border-radius: 3px;
  font-family: "Liberation Sans", sans-serif;
  font-size: 15px;
}

.save-btn {
  width: 85px;
  background-color: #d2dae3;
  color: #4d6072;
}

.undo-btn {
  width: 122px;
  background-color: #27517c;
  color: white;
}

.cursor {
  position: absolute;
  top: 281px;
  right: 67px;
}

/* bottom navigation */
.bottom-nav {
  display: flex;
  height: 78px;
  border-top: 2px solid #1c4778;
  background-color: #285189;
  color: white;
}

.nav-add {
  width: 76px;
  padding-left: 2px;
}

.nav-item {
  display: flex;
  flex-direction: column;
  align-items: center;
  gap: 6px;
  padding: 14px 20px 0;
  color: white;
  font-weight: 500;
  line-height: 18px;
  text-decoration: none;
}

.nav-item.active {
  background-color: #0d2b4d;
}

.nav-item span {
  display: flex;
  align-items: center;
  gap: 5px;
}

.new {
  padding: 0 4px;
  border-radius: 4px;
  background-color: #4eaa87;
  font-size: 10px;
  font-style: normal;
  font-weight: 700;
  line-height: 14px;
}

.nav-more {
  width: 48px;
}

.nav-collapse {
  align-self: flex-start;
  margin: 5px 5px 0 auto;
}
```
